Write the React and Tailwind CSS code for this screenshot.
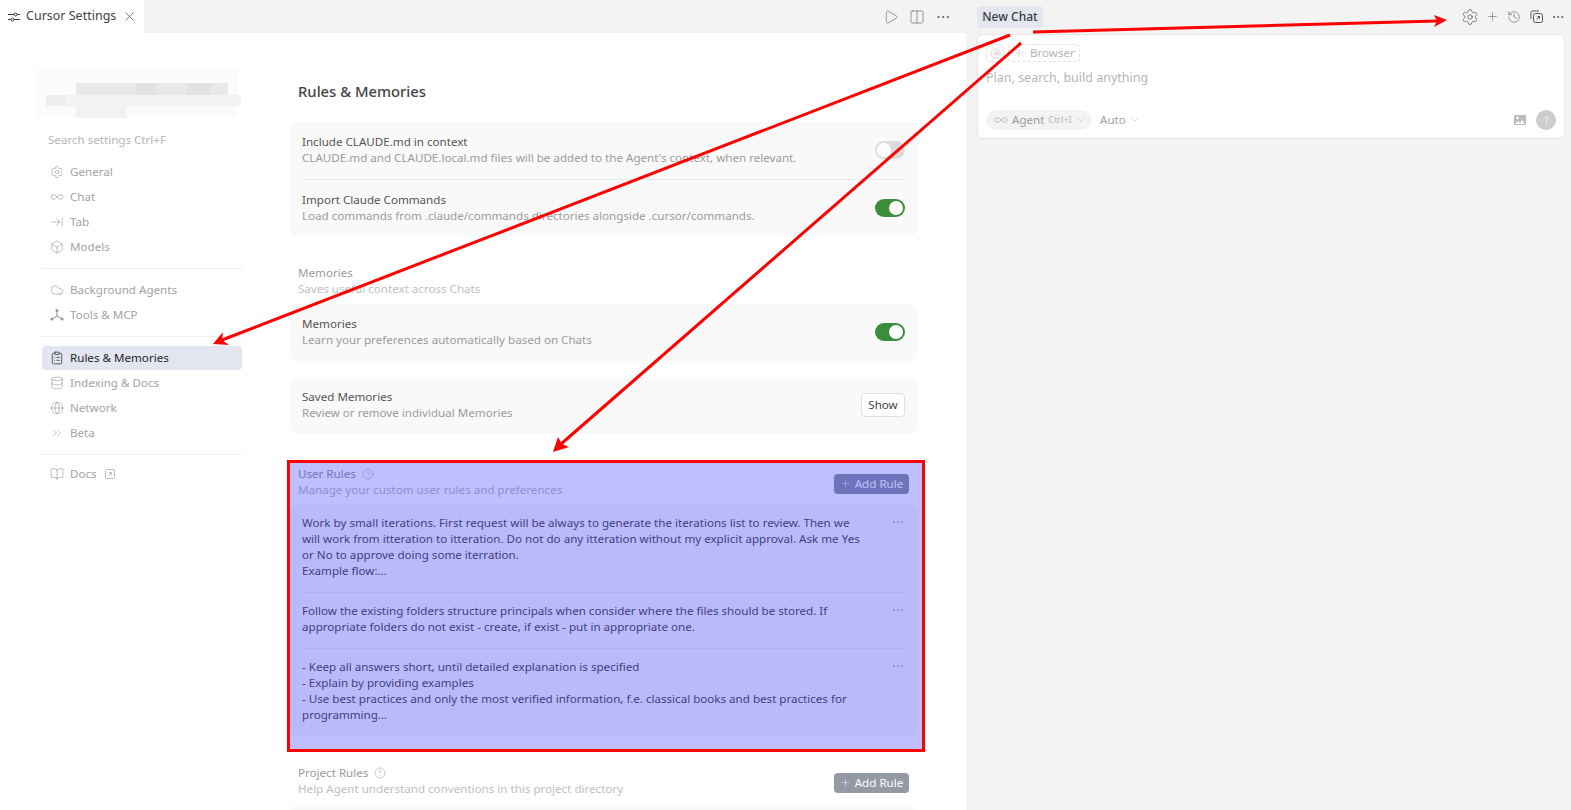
import React from "react";
import {
  Settings,
  Infinity as InfinityIcon,
  ArrowRightToLine,
  Box,
  Cloud,
  ClipboardList,
  Database,
  Globe,
  ChevronsRight,
  BookOpen,
  X,
  Play,
  Columns2,
  Ellipsis,
  Plus,
  History,
  ArrowUp,
  ChevronDown,
  CircleHelp,
  AtSign,
} from "lucide-react";

function ToolsIcon() {
  return (
    <svg width="14" height="14" viewBox="0 0 14 14" fill="none" stroke="currentColor" strokeWidth="1">
      <path d="M7 3v5M7 8l-4.500 2.500M7 8l4.500 2.500" />
      <circle cx="7" cy="2.500" r="1.500" fill="currentColor" stroke="none" />
      <circle cx="2" cy="11" r="1.500" fill="currentColor" stroke="none" />
      <circle cx="12" cy="11" r="1.500" fill="currentColor" stroke="none" />
    </svg>
  );
}

function TabSliders() {
  return (
    <svg width="12" height="12" viewBox="0 0 12 12" fill="none" stroke="#333" strokeWidth="1">
      <path d="M0 3.500h6M9 3.500h3M0 8.500h3M6 8.500h6" />
      <circle cx="7.500" cy="3.500" r="1.500" />
      <circle cx="4.500" cy="8.500" r="1.500" />
    </svg>
  );
}

function NavItem({ icon: Icon, label, active }) {
  return (
    <div
      className={
        "flex items-center h-6 pl-2 rounded gap-[6px] " +
        (active ? "bg-[#e3e5f0] text-[#1f1f1f]" : "text-[#a3a3a3]")
      }
    >
      <span className={"w-[14px] flex justify-center " + (active ? "text-[#222]" : "text-[#949494]")}>
        <Icon size={16} strokeWidth={active ? 1.2 : 1} />
      </span>
      <span>{label}</span>
    </div>
  );
}

function Divider() {
  return <div className="h-px bg-[#efefef] my-[9px]" />;
}

function Toggle({ on }) {
  return (
    <div
      className={
        "w-[30px] h-[18px] rounded-full flex items-center p-[2px] " +
        (on ? "bg-[#3b8c3b] justify-end" : "bg-[#dcdcdc] justify-start")
      }
    >
      <div className="w-[14px] h-[14px] rounded-full bg-white" />
    </div>
  );
}

function SettingRow({ title, sub, right }) {
  return (
    <div className="flex items-center justify-between pb-px">
      <div>
        <div className="text-[#555] leading-4">{title}</div>
        <div className="text-[#9b9b9b] leading-4">{sub}</div>
      </div>
      {right}
    </div>
  );
}

function AddRule() {
  return (
    <div className="w-[75px] h-5 mt-[3px] rounded bg-[#949aa5] text-white flex items-center justify-center gap-1">
      <Plus size={11} strokeWidth={1} />
      <span>Add Rule</span>
    </div>
  );
}

function SectionHead({ title, sub, help, right }) {
  return (
    <div className="flex items-center justify-between pl-2 pr-2">
      <div>
        <div className="flex items-center gap-[6px] text-[#9b9b9b] leading-4">
          {title}
          {help && <CircleHelp size={12} strokeWidth={1} />}
        </div>
        <div className="text-[#c0c0c0] leading-4">{sub}</div>
      </div>
      {right}
    </div>
  );
}

function RuleRow({ lines, last }) {
  return (
    <div className={"flex justify-between " + (last ? "pt-[10px]" : "pt-[10px] pb-[13px] border-b border-[#eeeeee]")}>
      <div className="w-[570px] leading-4 text-[#555]">
        {lines.map((l) => (
          <div key={l} className="whitespace-nowrap">
            {l}
          </div>
        ))}
      </div>
      <Ellipsis size={14} strokeWidth={1} className="text-[#a3a3a3]" />
    </div>
  );
}

function Annotations() {
  return (
    <svg className="absolute inset-0 pointer-events-none" width="1571" height="810" viewBox="0 0 1571 810">
      <g stroke="#ff0000" strokeWidth="3" fill="none">
        <path d="M1010 35L222 340" />
        <path d="M1021 43L561 444" />
        <path d="M1033 32L1437 21" />
      </g>
      <g fill="#ff0000">
        <path d="M213 344L223 332L222 340L229 345Z" />
        <path d="M553 452L558 437L562 444L569 447Z" />
        <path d="M1447 20L1434 15L1437 21L1434 27Z" />
      </g>
    </svg>
  );
}

export default function App() {
  return (
    <div className="relative h-[810px] w-[1571px] overflow-hidden flex bg-white text-[11.6px] font-['Noto_Sans','Open_Sans',sans-serif]">
      {/* left editor area */}
      <div className="w-[966px] flex flex-col">
        <div className="h-[33px] bg-[#f3f3f3] flex items-center">
          <div className="w-[144px] h-full bg-white flex items-center pl-2 text-[#444] text-[12.500px]">
            <TabSliders />
            <span className="ml-[6px]">Cursor Settings</span>
            <X size={15} strokeWidth={1} className="ml-[6px] text-[#333]" />
          </div>
          <div className="ml-auto flex items-center gap-[10px] pr-[15px] text-[#666]">
            <Play size={16} strokeWidth={1} />
            <Columns2 size={16} strokeWidth={1} />
            <Ellipsis size={16} strokeWidth={1.500} />
          </div>
        </div>
        <div className="flex-1 flex min-h-0">
          {/* sidebar */}
          <div className="w-[290px] pl-[42px] pr-[48px]">
            <svg className="mt-[37px] -ml-[7px]" width="206" height="48" viewBox="0 0 206 48">
              <rect width="203" height="48" fill="#fbfbfb" />
              <rect x="41" y="13" width="152" height="12" fill="#e9e9e9" />
              <rect x="101" y="13" width="20" height="12" fill="#e2e2e2" />
              <rect x="152" y="13" width="24" height="12" fill="#e2e2e2" />
              <rect x="11" y="25" width="195" height="11" fill="#f3f3f3" />
              <rect x="11" y="25" width="20" height="11" fill="#eeeeee" />
              <rect x="41" y="36" width="50" height="12" fill="#f1f1f1" />
            </svg>
            <div className="pl-[6px] mt-[14px] h-4 leading-4 text-[#b5b5b5]">Search settings Ctrl+F</div>
            <div className="mt-[12px] flex flex-col gap-px">
              <NavItem icon={Settings} label="General" />
              <NavItem icon={InfinityIcon} label="Chat" />
              <NavItem icon={ArrowRightToLine} label="Tab" />
              <NavItem icon={Box} label="Models" />
            </div>
            <Divider />
            <div className="flex flex-col gap-px">
              <NavItem icon={Cloud} label="Background Agents" />
              <NavItem icon={ToolsIcon} label="Tools & MCP" />
            </div>
            <Divider />
            <div className="flex flex-col gap-px">
              <NavItem icon={ClipboardList} label="Rules & Memories" active />
              <NavItem icon={Database} label="Indexing & Docs" />
              <NavItem icon={Globe} label="Network" />
              <NavItem icon={ChevronsRight} label="Beta" />
            </div>
            <div className="h-px bg-[#efefef] mt-[9px] mb-[7px]" />
            <div className="flex items-center h-6 pl-2 gap-[6px] text-[#a3a3a3]">
              <span className="w-[14px] flex justify-center text-[#949494]">
                <BookOpen size={16} strokeWidth={1} />
              </span>
              <span>Docs</span>
              <svg className="ml-[2px]" width="10" height="10" viewBox="0 0 10 10" fill="none" stroke="#bdbdbd" strokeWidth="1">
                <rect x="0.500" y="0.500" width="9" height="9" rx="1" />
                <path d="M3.500 6.500l3-3M4 3.500h2.500V6" />
              </svg>
            </div>
          </div>
          {/* main */}
          <div className="w-[627px]">
            <div className="pl-2 mt-[47px] h-[22px] leading-[22px] text-[14.800px] font-medium text-[#444]">Rules & Memories</div>
            <div className="mt-[20px] bg-[#f9f9f9] rounded-lg px-3 h-[114px] flex flex-col">
              <div className="h-[58px] flex flex-col justify-center border-b border-[#eaeaea]">
                <SettingRow
                  title="Include CLAUDE.md in context"
                  sub="CLAUDE.md and CLAUDE.local.md files will be added to the Agent's context, when relevant."
                  right={<Toggle />}
                />
              </div>
              <div className="flex-1 flex flex-col justify-center">
                <SettingRow
                  title="Import Claude Commands"
                  sub="Load commands from .claude/commands directories alongside .cursor/commands."
                  right={<Toggle on />}
                />
              </div>
            </div>
            <div className="mt-[29px]">
              <SectionHead title="Memories" sub="Saves useful context across Chats" />
            </div>
            <div className="mt-[7px] bg-[#f9f9f9] rounded-lg px-3 h-[57px] flex flex-col justify-center">
              <SettingRow title="Memories" sub="Learn your preferences automatically based on Chats" right={<Toggle on />} />
            </div>
            <div className="mt-[16px] bg-[#f9f9f9] rounded-lg px-3 h-[57px] flex flex-col justify-center">
              <SettingRow
                title="Saved Memories"
                sub="Review or remove individual Memories"
                right={
                  <div className="w-[44px] h-6 rounded border border-[#e0e0e0] bg-white flex items-center justify-center text-[#444]">
                    Show
                  </div>
                }
              />
            </div>
            <div className="mt-[32px]">
              <SectionHead title="User Rules" sub="Manage your custom user rules and preferences" help right={<AddRule />} />
            </div>
            <div className="mt-[7px] bg-[#f9f9f9] rounded-lg px-3 h-[232px]">
              <RuleRow
                lines={[
                  "Work by small iterations. First request will be always to generate the iterations list to review. Then we",
                  "will work from itteration to itteration. Do not do any itteration without my explicit approval. Ask me Yes",
                  "or No to approve doing some iterration.",
                  "Example flow:…",
                ]}
              />
              <RuleRow
                lines={[
                  "Follow the existing folders structure principals when consider where the files should be stored. If",
                  "appropriate folders do not exist - create, if exist - put in appropriate one.",
                ]}
              />
              <RuleRow
                last
                lines={[
                  "- Keep all answers short, until detailed explanation is specified",
                  "- Explain by providing examples",
                  "- Use best practices and only the most verified information, f.e. classical books and best practices for",
                  "programming…",
                ]}
              />
            </div>
            <div className="mt-[28px]">
              <SectionHead title="Project Rules" sub="Help Agent understand conventions in this project directory" help right={<AddRule />} />
            </div>
            <div className="mt-[8px] bg-[#f9f9f9] rounded-lg h-[40px]" />
          </div>
        </div>
      </div>
      {/* chat panel */}
      <div className="flex-1 bg-[#f3f3f3] pl-[11px] pr-[6px]">
        <div className="h-[33px] flex items-center justify-between">
          <div className="w-[66px] h-[22px] rounded bg-[#e4e6f0] flex items-center justify-center font-medium text-[12px] text-[#3c3c3c]">
            New Chat
          </div>
          <div className="flex items-center text-[#555] -mr-[4px]">
            <span className="w-[22px] flex justify-center">
              <Settings size={18} strokeWidth={1} />
            </span>
            <span className="w-[22px] flex justify-center">
              <Plus size={13} strokeWidth={1} />
            </span>
            <span className="w-[22px] flex justify-center">
              <History size={14} strokeWidth={1} />
            </span>
            <span className="w-[22px] flex justify-center">
              <svg width="13" height="13" viewBox="0 0 13 13" fill="none" stroke="currentColor" strokeWidth="1">
                <rect x="3.500" y="3.500" width="9" height="9" rx="2" />
                <path d="M1 9V2.500A1.500 1.500 0 0 1 2.500 1H9" />
                <path d="M6.500 9.500l3-3M7.500 6.500h2v2" />
              </svg>
            </span>
            <span className="w-[22px] flex justify-center">
              <Ellipsis size={14} strokeWidth={1.500} />
            </span>
          </div>
        </div>
        <div className="mt-px h-[105px] bg-white border border-[#e5e5e5] rounded-md px-2 pt-[9px] flex flex-col">
          <div className="flex items-center gap-1 h-[18px] text-[#b5b5b5]">
            <div className="w-[18px] h-[18px] border border-[#eaeaea] rounded flex items-center justify-center">
              <AtSign size={11} strokeWidth={1.200} />
            </div>
            <div className="h-[18px] border border-dashed border-[#e2e2e2] rounded flex items-center px-1 gap-[5px]">
              <Plus size={12} strokeWidth={1} />
              Browser
            </div>
          </div>
          <div className="mt-[8px] leading-4 text-[12.500px] text-[#b5b5b5]">Plan, search, build anything</div>
          <div className="mt-auto mb-2 flex items-center">
            <div className="h-5 w-[106px] rounded-full bg-[#f3f3f3] flex items-center pl-2 text-[#9b9b9b] gap-1">
              <InfinityIcon size={14} strokeWidth={1} />
              <span>Agent</span>
              <span className="text-[9px] text-[#b5b5b5]">Ctrl+I</span>
              <ChevronDown size={10} strokeWidth={1} />
            </div>
            <div className="ml-2 flex items-center gap-1 text-[#a3a3a3]">
              Auto
              <ChevronDown size={10} strokeWidth={1} />
            </div>
            <div className="ml-auto flex items-center gap-[10px]">
              <svg width="12" height="10" viewBox="0 0 12 10">
                <rect width="12" height="10" fill="#bdbdbd" />
                <circle cx="3.500" cy="3" r="1.200" fill="#fff" />
                <path d="M1 9l3-3 2 2 2-3 3 4z" fill="#fff" />
              </svg>
              <div className="w-5 h-5 rounded-full bg-[#cdcdcd] flex items-center justify-center text-white">
                <ArrowUp size={13} strokeWidth={1} />
              </div>
            </div>
          </div>
        </div>
      </div>
      {/* highlighted region, drawn over the page */}
      <div className="absolute left-[287px] top-[460px] w-[638px] h-[292px] border-[3px] border-[#ff0000] bg-[#0000ff]/25" />
      <Annotations />
    </div>
  );
}
